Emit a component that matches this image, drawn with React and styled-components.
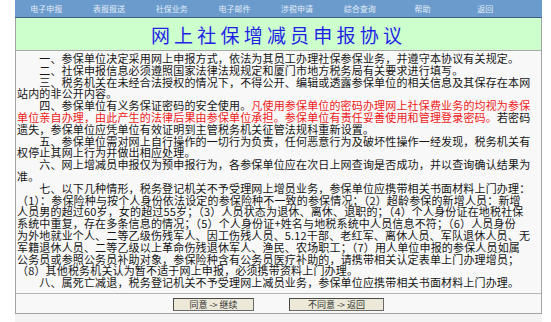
import React from "react";
import styled, { createGlobalStyle } from "styled-components";

const GlobalStyle = createGlobalStyle`
	html, body {
		margin: 0;
		padding: 0;
		background: #ffffff;
	}
	body {
		font-family: "Noto Sans CJK SC", "Noto Sans", sans-serif;
	}
`;

const navItems = ["电子申报", "表报报送", "社保业务", "电子邮件", "涉税申请", "综合查询", "帮助", "返回"];

const App = () => {
	return (
		<>
			<GlobalStyle />
			<Page>
				<Frame>
					<NavBar>
						{navItems.map((item) => (
							<NavItem key={item}>{item}</NavItem>
						))}
					</NavBar>
					<TitleBar>
						<h1>网上社保增减员申报协议</h1>
					</TitleBar>
					<Body>
						<Para>一、参保单位决定采用网上申报方式，依法为其员工办理社保参保业务，并遵守本协议有关规定。</Para>
						<Para>二、社保申报信息必须遵照国家法律法规规定和厦门市地方税务局有关要求进行填写。</Para>
						<Para>
							三、税务机关在未经合法授权的情况下，不得公开、编辑或透露参保单位的相关信息及其保存在本网
							<br />
							站内的非公开内容。
						</Para>
						<Para>
							四、参保单位有义务保证密码的安全使用。
							<Warn>
								凡使用参保单位的密码办理网上社保费业务的均视为参保
								<br />
								单位亲自办理，由此产生的法律后果由参保单位承担。参保单位有责任妥善使用和管理登录密码。
							</Warn>
							若密码
							<br />
							遗失，参保单位应凭单位有效证明到主管税务机关征管法规科重新设置。
						</Para>
						<Para>
							五、参保单位需对网上自行操作的一切行为负责，任何恶意行为及破坏性操作一经发现，税务机关有
							<br />
							权停止其网上行为并做出相应处理。
						</Para>
						<Para>
							六、网上增减员申报仅为预申报行为，各参保单位应在次日上网查询是否成功，并以查询确认结果为
							<br />
							准。
						</Para>
						<Para>
							七、以下几种情形，税务登记机关不予受理网上增员业务，参保单位应携带相关书面材料上门办理：
							<br />
							（1）：参保险种与按个人身份依法设定的参保险种不一致的参保情况；（2）超龄参保的新增人员：新增
							<br />
							人员男的超过60岁，女的超过55岁；（3）人员状态为退休、离休、退职的；（4）个人身份证在地税社保
							<br />
							系统中重复，存在多条信息的情况；（5）个人身份证+姓名与地税系统中人员信息不符；（6）人员身份
							<br />
							为外地就业个人、二等乙级伤残军人、因工伤残人员、5.12干部、老红军、离休人员、军队退休人员、无
							<br />
							军籍退休人员、二等乙级以上革命伤残退休军人、渔民、农场职工；（7）用人单位申报的参保人员如属
							<br />
							公务员或参照公务员补助对象，参保险种含有公务员医疗补助的，请携带相关认定表单上门办理增员；
							<br />
							（8）其他税务机关认为暂不适于网上申报，必须携带资料上门办理。
						</Para>
						<Para>八、属死亡减退，税务登记机关不予受理网上减员业务，参保单位应携带相关书面材料上门办理。</Para>
					</Body>
					<ButtonRow>
						<Button $width={81}>同意 -&gt; 继续</Button>
						<Button $width={95}>不同意 -&gt; 返回</Button>
					</ButtonRow>
				</Frame>
				<Footer />
			</Page>
		</>
	);
};

const Page = styled.div`
	width: 527px;
	margin-left: 15px;
`;

const Frame = styled.div`
	border-left: 1px solid #a3a3a3;
	border-right: 1px solid #a3a3a3;
	border-bottom: 1px solid #a3a3a3;
`;

const NavBar = styled.nav`
	display: grid;
	grid-template-columns: repeat(8, 62.7px);
	height: 17px;
	background: #6b9bcd;
	border-bottom: 1px solid #3f5f86;
	margin: 0 -1px;
`;

const NavItem = styled.div`
	display: flex;
	align-items: center;
	justify-content: center;
	font-size: 8px;
	color: #e4ecf6;
	white-space: nowrap;
`;

const TitleBar = styled.div`
	height: 32px;
	display: flex;
	align-items: center;
	justify-content: center;
	background: #ccffcc;
	border-bottom: 1px solid #a8a8a8;
	h1 {
		margin: 0;
		font-size: 19px;
		font-weight: 400;
		letter-spacing: 4.2px;
		color: #1f1fe6;
		line-height: 1;
	}
`;

const Body = styled.div`
	background: #f8f8f8;
	padding: 2px 2px 3px 1px;
	height: 237px;
	font-size: 11px;
	letter-spacing: 0.16px;
	line-height: 11.8px;
	color: #151515;
	white-space: nowrap;
`;

const Para = styled.p`
	margin: 0;
	text-indent: 22.3px;
`;

const Warn = styled.span`
	color: #f01818;
`;

const ButtonRow = styled.div`
	display: flex;
	justify-content: center;
	align-items: flex-start;
	gap: 35px;
	height: 15px;
	padding-top: 4px;
	background: #f8f8f8;
	border-top: 1px solid #b4b4b4;
`;

const Button = styled.button`
	width: ${(p) => p.$width}px;
	height: 13px;
	padding: 0;
	margin: 0;
	background: #ece9d8;
	border: 1px solid #4a4a4a;
	border-right-color: #6a6a6a;
	border-bottom-color: #6a6a6a;
	font-family: "Noto Sans CJK SC", sans-serif;
	font-size: 9px;
	line-height: 11px;
	color: #333333;
	white-space: nowrap;
`;

const Footer = styled.div`
	height: 9px;
	background: #f3f3f3;
`;

export default App;
